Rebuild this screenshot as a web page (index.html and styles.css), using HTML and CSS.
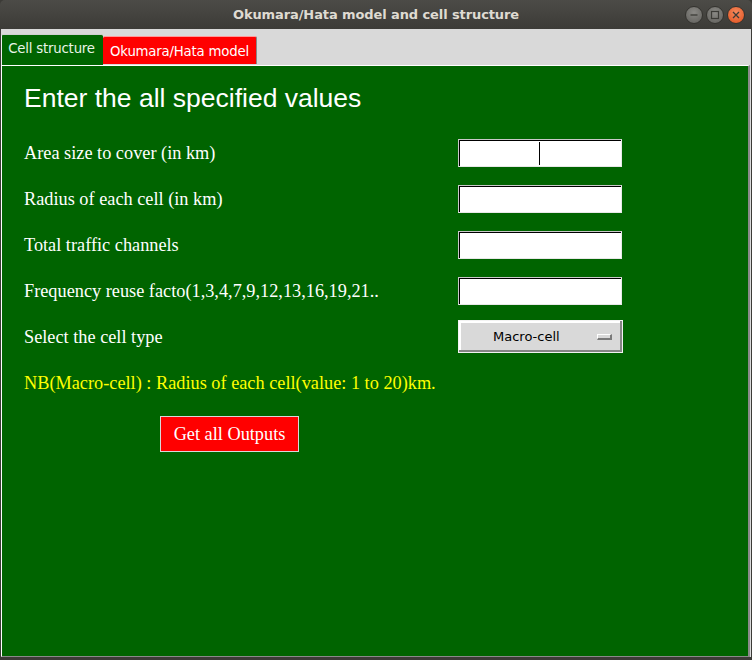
FILE: index.html
```html
<!DOCTYPE html>
<html>
<head>
<meta charset="utf-8">
<link rel="stylesheet" href="styles.css">
</head>
<body>
<div class="window">
  <div class="titlebar">
    <div class="title">Okumara/Hata model and cell structure</div>
    <div class="controls">
      <span class="ctl"><svg width="16" height="16" viewBox="0 0 16 16"><line x1="4.5" y1="8" x2="11.5" y2="8" stroke="#3c3b37" stroke-width="1.3"/></svg></span>
      <span class="ctl"><svg width="16" height="16" viewBox="0 0 16 16"><rect x="4.5" y="4.5" width="7" height="7" fill="none" stroke="#3c3b37" stroke-width="1.2"/></svg></span>
      <span class="ctl close"><svg width="16" height="16" viewBox="0 0 16 16"><path d="M5 5 L11 11 M11 5 L5 11" stroke="#3c3b37" stroke-width="1.3"/></svg></span>
    </div>
  </div>
  <div class="client">
    <div class="tabs">
      <div class="tab active">Cell structure</div>
      <div class="tab other">Okumara/Hata model</div>
    </div>
    <div class="panel">
      <h1 class="heading">Enter the all specified values</h1>
      <div class="form">
        <div class="label">Area size to cover (in km)</div>
        <div class="cell"><div class="entry"><span class="cursor"></span></div></div>
        <div class="label">Radius of each cell (in km)</div>
        <div class="cell"><div class="entry"></div></div>
        <div class="label">Total traffic channels</div>
        <div class="cell"><div class="entry"></div></div>
        <div class="label">Frequency reuse facto(1,3,4,7,9,12,13,16,19,21..</div>
        <div class="cell"><div class="entry"></div></div>
        <div class="label">Select the cell type</div>
        <div class="cell"><div class="option"><span class="opt-text">Macro-cell</span><span class="indicator"></span></div></div>
      </div>
      <div class="note">NB(Macro-cell) : Radius of each cell(value: 1 to 20)km.</div>
      <div class="btn-row"><div class="btn">Get all Outputs</div></div>
    </div>
  </div>
</div>
</body>
</html>
```
FILE: styles.css
```css
* { box-sizing: border-box; }
html, body { margin: 0; padding: 0; }
body { width: 752px; height: 660px; overflow: hidden; background: #3c3b37; }
.window { width: 752px; height: 660px; display: flex; flex-direction: column; background: #3c3b37; }
.titlebar {
  height: 29px; flex: none; position: relative;
  background: linear-gradient(#4c4b47, #3c3b37);
  display: flex; align-items: center; justify-content: center;
  border-radius: 5px 5px 0 0;
}
.title { font-family: "DejaVu Sans", sans-serif; font-weight: bold; font-size: 13px; color: #dfdbd2; letter-spacing: -0.1px; }
.controls { position: absolute; right: 7px; top: 6px; display: flex; gap: 3px; }
.ctl { width: 18px; height: 18px; border-radius: 50%; background: radial-gradient(circle at 50% 35%, #8a8985, #5f5e5a); display: flex; align-items: center; justify-content: center; border: 1px solid #34332f; }
.ctl.close { background: radial-gradient(circle at 50% 35%, #f58a5e, #e0501d); }
.client { flex: 1; display: flex; flex-direction: column; background: #d9d9d9; margin: 0 1px 3px 1px; border-right: 1px solid #d9d9d9; }
.tabs { height: 36px; flex: none; display: flex; align-items: flex-end; padding-left: 0; }
.tab { font-family: "DejaVu Sans", sans-serif; font-size: 13.3px; display: flex; align-items: center; justify-content: center; letter-spacing: -0.2px; }
.tab.active { width: 102px; height: 31px; background: #006400; color: #e8f4e8; border-top: 1px solid #d0d0d0; border-left: 1px solid #f0f0f0; border-radius: 2px 2px 0 0; padding-bottom: 3px; padding-right: 2px; }
.tab.other { width: 154px; height: 28px; background: #ff0000; color: #ffffff; border-top: 1px solid #ff9b9b; border-right: 1px solid #888; border-radius: 2px 2px 0 0; margin-bottom: 1px; padding-top: 1px; }
.panel { flex: 1; background: #006400; border-top: 1px solid #ffffff; border-left: 1px solid #ffffff; border-right: 2px solid #8a8a8a; border-bottom: 1px solid #8a8a8a; padding: 0 0 0 22px; }
.heading { margin: 18px 0 18px 0; font-family: "Liberation Sans", Arial, sans-serif; font-weight: normal; font-size: 26.5px; line-height: 28px; color: #ffffff; }
.form { display: grid; grid-template-columns: 434px 165px; grid-auto-rows: 46px; align-items: center; }
.label { font-family: "Liberation Serif", "Times New Roman", serif; font-size: 18.3px; color: #ffffff; white-space: nowrap; }
.cell { display: flex; align-items: center; }
.entry { width: 164px; height: 28px; background: #fff; border: 1px solid #c9c9c9; border-bottom-color: #e8e8e8; border-right-color: #e8e8e8; box-shadow: inset 1px 1px 0 #000; display: flex; align-items: center; padding-left: 80px; }
.cursor { width: 1px; height: 23px; background: #000; }
.option { width: 165px; height: 33px; margin-top: -1px; background: #d9d9d9; border: 1px solid #f2f2f2; box-shadow: inset -2px -2px 0 #858585, inset 2px 2px 0 #ffffff; display: flex; align-items: center; padding: 0 10px 0 34px; }
.opt-text { font-family: "DejaVu Sans", sans-serif; font-size: 13px; color: #000; flex: 1; }
.indicator { width: 15px; height: 6px; background: #d9d9d9; border-top: 1px solid #ffffff; border-left: 1px solid #ffffff; border-right: 2px solid #7a7a7a; border-bottom: 2px solid #7a7a7a; }
.note { height: 46px; display: flex; align-items: center; font-family: "Liberation Serif", "Times New Roman", serif; font-size: 18.3px; color: #ffff00; white-space: nowrap; }
.btn-row { padding: 10px 0 0 136px; }
.btn { width: 139px; height: 36px; background: #ff0000; border: 1px solid #d9d9d9; color: #ffffff; font-family: "Liberation Serif", "Times New Roman", serif; font-size: 18.3px; display: flex; align-items: center; justify-content: center; }
```
